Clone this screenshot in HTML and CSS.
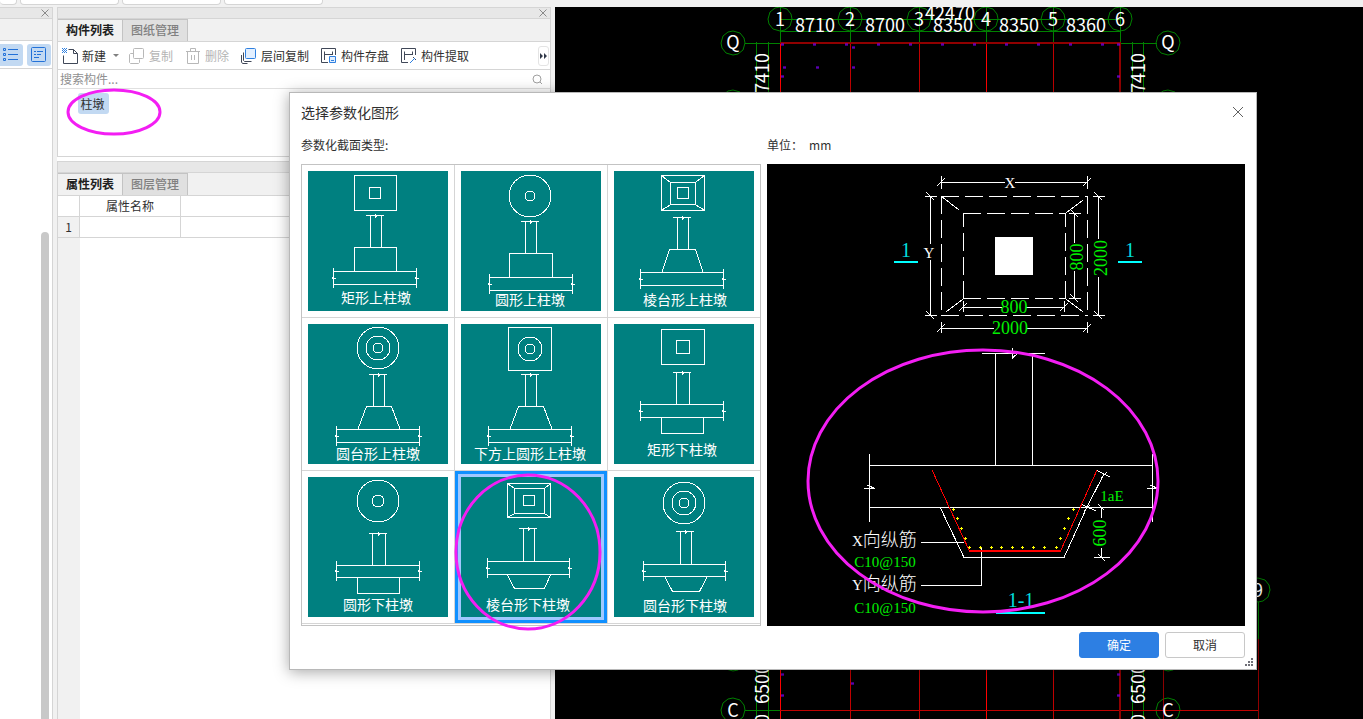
FILE: index.html
```html
<!DOCTYPE html>
<html lang="zh-CN">
<head>
    <meta charset="UTF-8">
    <meta name="viewport" content="width=device-width, initial-scale=1.0">
    <title>选择参数化图形</title>
    <link rel="stylesheet" href="styles.css">
</head>
<body>
    <!-- shared drawing symbols -->
    <svg class="defs" aria-hidden="true">
        <defs>
            <path id="cut-v" d="M0 -10V10M-2 0H2M-1 -1V1"/>
            <path id="cut-h" d="M-9 0H9M0 -2V2M1 -1V1"/>
            <path id="bubble" d="M0 -12L7 -10L11 -5L12 0L10 7L5 11L0 12L-7 10L-11 5L-12 0L-10 -7L-5 -11Z"/>
            <path id="dot" d="M-1 0H2M-1 1H2" />
            <path id="bar" d="M-1 .5H2M.5 -1V2"/>
            <path id="slash" d="M-4 4L4 -4"/>
            <path id="back" d="M-4 -4L4 4"/>
        </defs>
    </svg>

    <div class="app">
        <div class="ribbon">
            <span class="ribbon-group first"></span>
            <span class="ribbon-group"></span>
            <span class="ribbon-group"></span>
            <span class="ribbon-group"></span>
        </div>

        <div class="workspace">
            <aside class="nav">
                <div class="dock-title"><button class="dock-close" aria-label="关闭"><svg width="8" height="8"><path d="M.5 .5L7.5 7.5M7.5 .5L.5 7.5"/></svg></button></div>
                <div class="nav-strip"></div>
                <div class="nav-tools">
                    <button class="nav-btn list" aria-label="列表">
                        <svg width="22" height="22"><path d="M3.500 4.500h2v2h-2zM3.500 9.500h2v2h-2zM3.500 14.500h2v2h-2zM8 5.500h10M8 10.500h10M8 15.500h10"/></svg>
                    </button>
                    <button class="nav-btn" aria-label="详情">
                        <svg width="24" height="22"><rect x="4.500" y="3.500" width="14" height="14" rx="1"/><path d="M7 7.500h2M10 7.500h6M7 10.500h2M10 10.500h4M7 13.500h5"/></svg>
                    </button>
                </div>
                <div class="nav-body"><span class="scroll-thumb"></span></div>
            </aside>

            <div class="docks">
                <section class="dock">
                    <div class="dock-title"><button class="dock-close" aria-label="关闭"><svg width="8" height="8"><path d="M.5 .5L7.5 7.5M7.5 .5L.5 7.5"/></svg></button></div>
                    <div class="tabs">
                        <button class="tab active">构件列表</button>
                        <button class="tab">图纸管理</button>
                    </div>
                    <div class="toolbar">
                        <button class="tool">
                            <svg width="16" height="16"><path d="M6.500 1.500h5l4 4v10h-14v-8M11.500 1.500v4h4"/><path class="blue dotted" d="M0 .5h5M0 2.500h5M0 4.500h5"/><path class="blue dotted" d="M1 1.500h4M1 3.500h4"/></svg>
                            新建
                            <i class="caret"></i>
                        </button>
                        <button class="tool" disabled>
                            <svg width="16" height="16"><path d="M4.500 5.500h-3l-1 1v8l1 1h8l1-1v-3"/><rect x="4.500" y=".5" width="10" height="10" rx="1"/></svg>
                            复制
                        </button>
                        <button class="tool" disabled>
                            <svg width="16" height="16"><path d="M1 3.500h14M5.500 3V.5h5V3M2.500 4v11.500h11V4M6.500 7v5M9.500 7v5"/></svg>
                            删除
                        </button>
                        <button class="tool">
                            <svg width="16" height="16"><path d="M2.500 4.500v8l1 1h7M.5 7v7l1 1.500h5"/><rect class="blue fill" x="4.500" y=".5" width="10" height="10" rx="1"/></svg>
                            层间复制
                        </button>
                        <button class="tool">
                            <svg width="16" height="16"><path d="M7 14.500H.5V.5h14V7M3.500 12V3.500M11.500 3.500V7M3.500 6.500h8"/><path class="blue fill" d="M8.500 8.500h6v6h-6zM10 12.500h3"/></svg>
                            构件存盘
                        </button>
                        <button class="tool">
                            <svg width="16" height="16"><path d="M7 14.500H.5V.5h14V7M3.500 12V3.500M11.500 3.500V7M3.500 6.500h8M12 9l3 3"/><path class="blue" d="M9 15l5-5"/></svg>
                            构件提取
                        </button>
                        <button class="more" aria-label="更多"><svg width="8" height="6"><path d="M0 0L3 3L0 6zM4 0L7 3L4 6z"/></svg></button>
                    </div>
                    <div class="search">
                        <input type="text" aria-label="搜索构件" placeholder="搜索构件...">
                        <svg width="12" height="12"><circle cx="6" cy="6" r="4"/><path d="M9 9l2 2"/></svg>
                    </div>
                    <div class="tree">
                        <button class="tree-item">柱墩</button>
                        <svg class="mark mark-tree" width="96" height="48"><ellipse cx="48" cy="24" rx="46" ry="22"/></svg>
                    </div>
                </section>

                <section class="dock props">
                    <div class="dock-title"></div>
                    <div class="tabs">
                        <button class="tab active">属性列表</button>
                        <button class="tab">图层管理</button>
                    </div>
                    <table class="prop-table">
                        <tr><th class="gutter"></th><th class="name">属性名称</th><th></th></tr>
                        <tr><td class="gutter">1</td><td></td><td></td></tr>
                    </table>
                    <div class="prop-rest"></div>
                </section>
            </div>

            <main class="model">
                <svg class="model-svg" width="808" height="712">
                    <g class="axis">
                        <path d="M225 12.500H566M225 24.500H566M190 36.500H225M566 36.500H602M190 703.500H225"/>
                        <path d="M225.500 0V36M295.500 0V36M364.500 0V36M431.500 0V36M498.500 0V36M565.500 0V36"/>
                        <path d="M201.500 35V712M213.500 35V712M577.500 35V712M588.500 35V712M703.500 595V632"/>
                        <use href="#bubble" x="225" y="12"/><use href="#bubble" x="295" y="12"/>
                        <use href="#bubble" x="364" y="12"/><use href="#bubble" x="431" y="12"/>
                        <use href="#bubble" x="498" y="12"/><use href="#bubble" x="565" y="12"/>
                        <use href="#bubble" x="178" y="36"/><use href="#bubble" x="613" y="36"/>
                        <use href="#bubble" x="178" y="95"/><use href="#bubble" x="613" y="95"/>
                        <use href="#bubble" x="178" y="652"/><use href="#bubble" x="613" y="652"/>
                        <use href="#bubble" x="178" y="703"/><use href="#bubble" x="613" y="703"/>
                        <use href="#bubble" x="703" y="583"/>
                    </g>
                    <g class="grid-lines">
                        <path class="bright" d="M225.500 36V712M431.500 36V712"/>
                        <path d="M295.500 36V712M364.500 36V712M498.500 36V712M225 703.500H703"/>
                        <path class="dark thick" d="M225 36H566M565 36V712"/>
                        <path class="dark" d="M608.500 655V712M703.500 632V712"/>
                    </g>
                    <g class="points">
                        <use href="#dot" x="227" y="37"/><use href="#dot" x="259" y="37"/><use href="#dot" x="291" y="37"/>
                        <use href="#dot" x="323" y="37"/><use href="#dot" x="355" y="37"/><use href="#dot" x="387" y="37"/>
                        <use href="#dot" x="419" y="37"/><use href="#dot" x="451" y="37"/><use href="#dot" x="483" y="37"/>
                        <use href="#dot" x="515" y="37"/><use href="#dot" x="547" y="37"/><use href="#dot" x="563" y="37"/>
                        <use href="#dot" x="298" y="40"/><use href="#dot" x="229" y="60"/><use href="#dot" x="262" y="60"/>
                        <use href="#dot" x="298" y="60"/><use href="#dot" x="227" y="69"/><use href="#dot" x="563" y="69"/>
                        <use href="#dot" x="227" y="667"/><use href="#dot" x="227" y="688"/><use href="#dot" x="297" y="676"/>
                        <use href="#dot" x="563" y="667"/><use href="#dot" x="563" y="688"/>
                    </g>
                    <g class="axis-text">
                        <text x="225" y="19">1</text><text x="295" y="19">2</text><text x="364" y="19">3</text>
                        <text x="431" y="19">4</text><text x="498" y="19">5</text><text x="565" y="19">6</text>
                        <text x="260" y="25">8710</text><text x="330" y="25">8700</text><text x="395" y="13">42470</text>
                        <text x="398" y="25">8350</text><text x="464" y="25">8350</text><text x="531" y="25">8360</text>
                        <text x="178" y="42">Q</text><text x="613" y="42">Q</text>
                        <text x="178" y="710">C</text><text x="613" y="710">C</text>
                        <text x="703" y="590">9</text>
                        <text transform="translate(214 66) rotate(-90)">7410</text>
                        <text transform="translate(590 66) rotate(-90)">7410</text>
                        <text transform="translate(214 677) rotate(-90)">6500</text>
                        <text transform="translate(590 677) rotate(-90)">6500</text>
                        <text transform="translate(214 712) rotate(-90)">0</text>
                        <text transform="translate(590 712) rotate(-90)">0</text>
                    </g>
                </svg>
            </main>
        </div>

        <div class="dialog" role="dialog" aria-labelledby="dialog-title">
            <header class="dialog-head">
                <h1 id="dialog-title">选择参数化图形</h1>
                <button class="dialog-close" aria-label="关闭"><svg width="12" height="12"><path d="M1 1L11 11M11 1L1 11"/></svg></button>
            </header>

            <div class="dialog-body">
                <div class="types">
                    <p class="caption">参数化截面类型:</p>
                    <div class="gallery">
                        <button class="shape">
                            <svg viewBox="0 0 140 140">
                                <path d="M46.500 4.500h42v35h-42zM61.500 16.500h11v11h-11zM62.500 44V76M73.500 44V76M46.500 100V76.500h42V100M25.500 100.500h83M25.500 113.500h83"/>
                                <use href="#cut-h" x="67" y="44.500"/><use href="#cut-v" x="25.500" y="107"/><use href="#cut-v" x="108.500" y="107"/>
                                <text x="68" y="132">矩形上柱墩</text>
                            </svg>
                        </button>
                        <button class="shape">
                            <svg viewBox="0 0 140 140">
                                <circle cx="69" cy="25" r="21"/><circle cx="69" cy="25" r="5"/>
                                <path d="M64.500 50V82M75.500 50V82M48.500 106V82.500h43V106M28.500 106.500h83M28.500 119.500h83"/>
                                <use href="#cut-h" x="69" y="50.500"/><use href="#cut-v" x="28.500" y="113"/><use href="#cut-v" x="111.500" y="113"/>
                                <text x="69" y="134">圆形上柱墩</text>
                            </svg>
                        </button>
                        <button class="shape">
                            <svg viewBox="0 0 140 140">
                                <path d="M47.500 4.500h43v35h-43zM56.500 11.500h25v22h-25zM63.500 16.500h11v11h-11zM48 5L56 11M90 5L82 11M48 39L56 34M90 39L82 34"/>
                                <path d="M63.500 46V78M74.500 46V78M48 101L55.500 78.500h26L89 101M26.500 101.500h83M26.500 114.500h83"/>
                                <use href="#cut-h" x="68" y="46.500"/><use href="#cut-v" x="26.500" y="108"/><use href="#cut-v" x="109.500" y="108"/>
                                <text x="71" y="134">棱台形上柱墩</text>
                            </svg>
                        </button>
                        <button class="shape">
                            <svg viewBox="0 0 140 140">
                                <circle cx="70" cy="24" r="21"/><circle cx="70" cy="24" r="12"/><circle cx="70" cy="24" r="5"/>
                                <path d="M65.500 50V82M76.500 50V82M50 105L58.500 82.500h25L92 105M28.500 105.500h83M28.500 118.500h83"/>
                                <use href="#cut-h" x="70" y="50.500"/><use href="#cut-v" x="28.500" y="112"/><use href="#cut-v" x="111.500" y="112"/>
                                <text x="70" y="135">圆台形上柱墩</text>
                            </svg>
                        </button>
                        <button class="shape">
                            <svg viewBox="0 0 140 140">
                                <path d="M47.500 3.500h43v43h-43z"/><circle cx="69" cy="25" r="12"/><circle cx="69" cy="25" r="5"/>
                                <path d="M64.500 50V82M75.500 50V82M49 105L57.500 82.500h25L91 105M27.500 105.500h83M27.500 118.500h83"/>
                                <use href="#cut-h" x="69" y="50.500"/><use href="#cut-v" x="27.500" y="112"/><use href="#cut-v" x="110.500" y="112"/>
                                <text x="69" y="135">下方上圆形上柱墩</text>
                            </svg>
                        </button>
                        <button class="shape">
                            <svg viewBox="0 0 140 140">
                                <path d="M47.500 5.500h43v35h-43zM62.500 16.500h13v13h-13zM62.500 48V80M75.500 48V80M47.500 94V109.500h42V94M26.500 80.500h83M26.500 93.500h83"/>
                                <use href="#cut-h" x="68" y="48.500"/><use href="#cut-v" x="26.500" y="87"/><use href="#cut-v" x="109.500" y="87"/>
                                <text x="68" y="131">矩形下柱墩</text>
                            </svg>
                        </button>
                        <button class="shape">
                            <svg viewBox="0 0 140 140">
                                <circle cx="70" cy="24" r="21"/><circle cx="70" cy="24" r="6"/>
                                <path d="M64.500 56V88M77.500 56V88M49.500 101V116.500h42V101M28.500 88.500h83M28.500 100.500h83"/>
                                <use href="#cut-h" x="70" y="56.500"/><use href="#cut-v" x="28.500" y="94"/><use href="#cut-v" x="111.500" y="94"/>
                                <text x="70" y="133">圆形下柱墩</text>
                            </svg>
                        </button>
                        <button class="shape selected" aria-pressed="true">
                            <svg viewBox="0 0 140 140">
                                <path d="M46.500 6.500h43v34h-43zM53.500 11.500h30v25h-30zM62.500 18.500h11v10h-11zM47 7L53 11M89 7L84 11M47 40L53 37M89 40L84 37"/>
                                <path d="M62.500 51V84M73.500 51V84M46.500 98L53.500 111.500h30L89.500 98M26.500 84.500h82M26.500 97.500h82"/>
                                <use href="#cut-h" x="67" y="51.500"/><use href="#cut-v" x="26.500" y="91"/><use href="#cut-v" x="108.500" y="91"/>
                                <text x="67" y="133">棱台形下柱墩</text>
                            </svg>
                            <svg class="mark mark-shape" width="146" height="160"><ellipse cx="73" cy="80" rx="72" ry="77"/></svg>
                        </button>
                        <button class="shape">
                            <svg viewBox="0 0 140 140">
                                <circle cx="70" cy="26" r="21"/><circle cx="70" cy="26" r="12"/><circle cx="70" cy="26" r="5"/>
                                <path d="M66.500 54V87M77.500 54V87M51 100L58.500 114.500h27L93 100M29.500 87.500h82M29.500 99.500h82"/>
                                <use href="#cut-h" x="71" y="54.500"/><use href="#cut-v" x="29.500" y="94"/><use href="#cut-v" x="111.500" y="94"/>
                                <text x="71" y="134">圆台形下柱墩</text>
                            </svg>
                        </button>
                    </div>
                </div>

                <div class="detail">
                    <p class="caption"><span>单位：</span><span>mm</span></p>
                    <div class="preview">
                        <svg class="preview-svg" viewBox="0 0 478 462" width="478" height="462">
                            <!-- plan -->
                            <g class="line">
                                <path d="M174.500 12V25M320.500 12V25M174 18.500H238M248 18.500H320"/>
                                <path d="M158 32.500H170M158 151.500H170M163.500 32V80M163.500 96V151"/>
                                <path d="M326 32.500H338M326 151.500H338M331.500 32V75M331.500 113V151"/>
                                <path d="M302 49.500H314M302 134.500H314M307.500 49V79M307.500 107V134"/>
                                <path d="M196.500 137V148M297.500 137V148M196 143.500H235M259 143.500H298"/>
                                <path d="M174.500 158V169M320.500 158V169M174 164.500H227M259 164.500H320"/>
                                <path d="M174 32L192 46M316 36L299 49M179 148L196 135M299 135L316 148"/>
                                <g class="dash">
                                    <path d="M174 32.500H321M174 151.500H321M174.500 32V152M320.500 32V152M196 49.500H299M196 134.500H299"/>
                                    <path class="shift" d="M196.500 49V135M298.500 49V135"/>
                                </g>
                                <use href="#slash" x="174" y="18"/><use href="#slash" x="320" y="18"/>
                                <use href="#slash" x="196" y="143"/><use href="#slash" x="297" y="143"/>
                                <use href="#slash" x="174" y="164"/><use href="#slash" x="320" y="164"/>
                                <use href="#back" x="163" y="32"/><use href="#back" x="163" y="151"/>
                                <use href="#back" x="331" y="32"/><use href="#back" x="331" y="151"/>
                                <use href="#back" x="307" y="49"/><use href="#back" x="307" y="134"/>
                            </g>
                            <rect class="column" x="228" y="73" width="38" height="38"/>
                            <g class="section-line"><path d="M127 98H151M351 98H375M229 449H278"/></g>

                            <!-- section 1-1 -->
                            <g class="line">
                                <path d="M215 189.500H278M245.500 184V194L251 189M228.500 190V301M265.500 190V301"/>
                                <path d="M102 301.500H386M102 343.500H386M102.500 290V358M385.500 290V358"/>
                                <path d="M97 324.500H108L100 321M380 324.500H391L383 321"/>
                                <path d="M173 343L197 393.500H297L320 343L337 310M329 306L343 313M314 340L329 347M340 308L334 314M323 341L317 347"/>
                                <path d="M334.500 343V354M334.500 384V394M327 393.500H343M331 340L337 346M331 390L338 397"/>
                                <path d="M154 378.500H197M154 421.500H214.500V383"/>
                            </g>
                            <path class="rebar" d="M165 306L202 386L202 387H293L294 386L330 306"/>
                            <path class="rebar thick" d="M202 387H294"/>
                            <g class="bars">
                                <use href="#bar" x="186" y="345"/><use href="#bar" x="190" y="354"/><use href="#bar" x="194" y="364"/>
                                <use href="#bar" x="198" y="374"/><use href="#bar" x="202" y="383"/><use href="#bar" x="213" y="383"/>
                                <use href="#bar" x="224" y="383"/><use href="#bar" x="234" y="383"/><use href="#bar" x="245" y="383"/>
                                <use href="#bar" x="255" y="383"/><use href="#bar" x="266" y="383"/><use href="#bar" x="277" y="383"/>
                                <use href="#bar" x="289" y="383"/><use href="#bar" x="293" y="374"/><use href="#bar" x="297" y="364"/>
                                <use href="#bar" x="301" y="354"/><use href="#bar" x="306" y="345"/>
                            </g>

                            <g class="dim white"><text x="243" y="24">X</text><text x="162" y="94">Y</text></g>
                            <g class="dim green">
                                <text x="247" y="149">800</text>
                                <text x="243" y="170">2000</text>
                                <text transform="translate(316 93) rotate(-90)">800</text>
                                <text transform="translate(340 94) rotate(-90)">2000</text>
                                <text transform="translate(339 369) rotate(-90)">600</text>
                                <text class="small" x="118" y="403">C10@150</text>
                                <text class="small" x="118" y="449">C10@150</text>
                                <text class="small" x="345" y="337">1aE</text>
                            </g>
                            <g class="dim cyan"><text x="139" y="93">1</text><text x="363" y="93">1</text><text x="254" y="443">1-1</text></g>
                            <g class="rebar-name">
                                <text x="85" y="382"><tspan class="latin">X</tspan>向纵筋</text>
                                <text x="85" y="426"><tspan class="latin">Y</tspan>向纵筋</text>
                            </g>
                        </svg>
                        <svg class="mark mark-preview" width="354" height="266"><ellipse cx="177" cy="133" rx="175" ry="131"/></svg>
                    </div>
                </div>
            </div>

            <footer class="dialog-foot">
                <button class="btn btn-primary">确定</button>
                <button class="btn">取消</button>
            </footer>
            <svg class="grip" width="8" height="8"><path d="M6 0h2v2h-2zM3 3h2v2h-2zM6 3h2v2h-2zM0 6h2v2h-2zM3 6h2v2h-2zM6 6h2v2h-2z"/></svg>
        </div>
    </div>
</body>
</html>
```
FILE: styles.css
```css
* {
    box-sizing: border-box;
}

body {
    margin: 0;
    font-family: "Noto Sans CJK SC", sans-serif;
    font-size: 12px;
    line-height: 18px;
    color: #303030;
    background: #f1f1f1;
    overflow: hidden;
}

button {
    margin: 0;
    padding: 0;
    border: none;
    background: none;
    font: inherit;
    color: inherit;
}

svg {
    display: block;
    flex: none;
    fill: none;
}

.defs {
    position: absolute;
    width: 0;
    height: 0;
}

.app {
    display: flex;
    flex-direction: column;
    height: 100vh;
}

/* bottom edge of the ribbon */
.ribbon {
    display: flex;
    gap: 3px;
    height: 7px;
}

.ribbon-group {
    width: 99px;
    height: 5px;
    background: #ffffff;
    border: 1px solid #d5d5d5;
    border-top: none;
    border-radius: 0 0 4px 4px;
}

.ribbon-group.first {
    width: 17px;
    border-left: none;
}

.workspace {
    display: flex;
    flex: 1;
    min-height: 0;
    gap: 4px;
}

/* left navigation */
.nav {
    display: flex;
    flex-direction: column;
    width: 53px;
    border-right: 1px solid #d5d5d5;
    background: #ffffff;
}

.dock-title {
    display: flex;
    justify-content: flex-end;
    align-items: center;
    flex: none;
    height: 12px;
    padding-right: 3px;
    background: #e7e7e7;
    border-top: 1px solid #d5d5d5;
    border-bottom: 1px solid #d5d5d5;
}

.dock-close svg {
    stroke: #8a8a8a;
}

.nav-strip {
    height: 22px;
    background: #f1f1f1;
    border-bottom: 1px solid #d5d5d5;
}

.nav-tools {
    display: flex;
    align-items: center;
    gap: 4px;
    height: 28px;
    border-bottom: 1px solid #d5d5d5;
}

.nav-btn {
    width: 24px;
    height: 22px;
    border-radius: 3px;
    background: #c2d9f2;
}

.nav-btn.list {
    width: 23px;
    border-radius: 0 3px 3px 0;
}

.nav-btn svg {
    stroke: #2271d8;
}

.nav-body {
    display: flex;
    flex: 1;
    justify-content: flex-end;
    padding: 163px 3px 0 0;
}

.scroll-thumb {
    width: 8px;
    border-radius: 4px 4px 0 0;
    background: #c8c8c8;
}

/* component and property docks */
.docks {
    display: flex;
    flex-direction: column;
    gap: 4px;
    width: 494px;
    background: #ffffff;
}

.dock {
    display: flex;
    flex-direction: column;
    border: 1px solid #d5d5d5;
    border-top: none;
    background: #ffffff;
}

.dock.props {
    flex: 1;
    border-bottom: none;
}

.tabs {
    display: flex;
    flex: none;
    height: 23px;
    background: #f1f1f1;
    border-bottom: 1px solid #d5d5d5;
}

.tab {
    width: 65px;
    padding-bottom: 1px;
    border-right: 1px solid #c3c3c3;
    border-top: 1px solid #c3c3c3;
    background: #e0e0e0;
    color: #808080;
    font-weight: 500;
}

.tab.active {
    background: #f1f1f1;
    color: #202020;
    font-weight: 700;
}

.toolbar {
    display: flex;
    align-items: center;
    gap: 12px;
    height: 28px;
    padding: 0 1px 0 4px;
    border-bottom: 1px solid #d5d5d5;
}

.tool {
    display: flex;
    align-items: center;
    gap: 4px;
    white-space: nowrap;
}

.tool svg {
    stroke: #404858;
}

.tool:disabled,
.tool:disabled svg {
    color: #b4b4b4;
    stroke: #b8b8b8;
}

.tool .blue {
    stroke: #2f80e0;
}

.tool .fill {
    fill: #e2efff;
}

.tool .dotted {
    stroke-dasharray: 1 1;
}

.caret {
    margin: 0 -2px 0 3px;
    border: 3px solid transparent;
    border-top: 3px solid #808080;
    border-bottom: none;
}

.more {
    display: flex;
    align-items: center;
    justify-content: center;
    width: 11px;
    height: 20px;
    margin-left: auto;
    border: 1px solid #e4e4e4;
    border-radius: 3px;
}

.more svg {
    fill: #303848;
}

.search {
    display: flex;
    align-items: center;
    height: 19px;
    padding: 0 7px 0 2px;
    border-bottom: 1px solid #e0e0e0;
}

.search input {
    flex: 1;
    height: 18px;
    padding: 0;
    border: none;
    outline: none;
    font: inherit;
}

.search input::placeholder {
    color: #909090;
}

.search svg {
    stroke: #a0a0a0;
}

.tree {
    position: relative;
    height: 67px;
    padding: 4px 0 0 20px;
}

.tree-item {
    width: 31px;
    height: 21px;
    padding-right: 2px;
    border-radius: 3px;
    background: #c2d9f2;
}

.prop-table {
    width: 100%;
    border-collapse: separate;
    border-spacing: 0;
    table-layout: fixed;
}

.prop-table th,
.prop-table td {
    height: 21px;
    padding: 0;
    border-right: 1px solid #d5d5d5;
    border-bottom: 1px solid #d5d5d5;
    font-weight: 400;
    text-align: center;
}

.prop-table .gutter {
    width: 22px;
}

.prop-table .name {
    width: 101px;
}

.prop-table td.gutter {
    background: #f1f1f1;
}

.prop-rest {
    flex: 1;
    width: 22px;
    background: #f1f1f1;
}

/* CAD model view */
.model {
    flex: 1;
    min-width: 0;
    overflow: hidden;
    background: #000000;
}

.axis {
    stroke: #008000;
}

.grid-lines {
    stroke: #c00000;
}

.grid-lines .bright {
    stroke: #ff0000;
}

.grid-lines .dark {
    stroke: #900000;
}

.grid-lines .thick {
    stroke-width: 2;
}

.points {
    stroke: #7a00f0;
}

.axis-text {
    fill: #ffffff;
    font-size: 18px;
    text-anchor: middle;
}

/* hand-drawn highlight rings */
.mark {
    position: absolute;
    overflow: visible;
    pointer-events: none;
    stroke: #f31ef3;
    stroke-width: 3;
}

.mark-tree {
    left: 8px;
    top: -1px;
}

.mark-shape {
    left: 0;
    top: 1px;
}

.mark-preview {
    left: 39px;
    top: 184px;
}

/* dialog */
.dialog {
    position: absolute;
    left: 289px;
    top: 92px;
    width: 968px;
    padding: 0 11px 11px;
    border: 1px solid #b8b8b8;
    background: #ffffff;
    box-shadow: 0 2px 14px rgba(0, 0, 0, 0.35);
}

.dialog-head {
    display: flex;
    align-items: center;
    justify-content: space-between;
    height: 37px;
}

.dialog-head h1 {
    margin: 0;
    font-size: 14px;
    font-weight: 400;
}

.dialog-close {
    padding-right: 1px;
}

.dialog-close svg {
    stroke: #606060;
}

.dialog-body {
    display: flex;
    gap: 6px;
}

.caption {
    display: flex;
    gap: 6px;
    margin: 0;
    padding: 6px 0 10px;
}

.gallery {
    display: grid;
    grid-template-columns: 153px 153px 152px;
    grid-auto-rows: 153px;
    width: 460px;
    height: 462px;
    border: 1px solid #c3c3c3;
}

.shape {
    position: relative;
    padding: 6px;
    border-right: 1px solid #d5d5d5;
    border-bottom: 1px solid #d5d5d5;
    background: #ffffff;
    background-clip: padding-box;
}

.shape:nth-child(3n) {
    border-right: none;
}

.shape.selected {
    z-index: 1;
    background: #a0c8ff;
    background-clip: padding-box;
    box-shadow: inset 0 0 0 3px #1090ff;
}

.shape > svg:first-child {
    width: 140px;
    height: 140px;
    background: #008080;
    stroke: #ffffff;
    shape-rendering: crispEdges;
}

.shape text {
    fill: #ffffff;
    stroke: none;
    font-size: 14px;
    text-anchor: middle;
}

.detail {
    flex: 1;
}

.preview {
    position: relative;
    background: #000000;
}

.line {
    stroke: #ffffff;
    shape-rendering: crispEdges;
}

.dash {
    stroke-dasharray: 18 6;
}

.dash .shift {
    stroke-dashoffset: 4;
}

.column {
    fill: #ffffff;
}

.section-line {
    stroke: #00ffff;
    stroke-width: 2;
}

.rebar {
    stroke: #ff0000;
    shape-rendering: crispEdges;
}

.rebar.thick {
    stroke-width: 2;
}

.bars {
    stroke: #ffff00;
    shape-rendering: crispEdges;
}

.dim {
    font-family: "Liberation Serif", serif;
    font-size: 18px;
    text-anchor: middle;
}

.dim.white {
    fill: #ffffff;
    font-size: 15px;
}

.dim.green {
    fill: #00f000;
}

.dim.cyan {
    fill: #00dddd;
    font-size: 20px;
}

.dim .small {
    font-size: 15px;
}

.rebar-name {
    fill: #ffffff;
    font-size: 18px;
    font-weight: 300;
}

.rebar-name .latin {
    font-family: "Liberation Serif", serif;
    font-size: 15px;
}

.dialog-foot {
    display: flex;
    justify-content: flex-end;
    gap: 6px;
    padding-top: 6px;
}

.btn {
    width: 80px;
    height: 26px;
    border: 1px solid #c8c8c8;
    border-radius: 3px;
    background: #ffffff;
}

.btn-primary {
    border-color: #2d7fe3;
    background: #2d7fe3;
    color: #ffffff;
}

.grip {
    position: absolute;
    right: 3px;
    bottom: 3px;
    fill: #707078;
}
```
